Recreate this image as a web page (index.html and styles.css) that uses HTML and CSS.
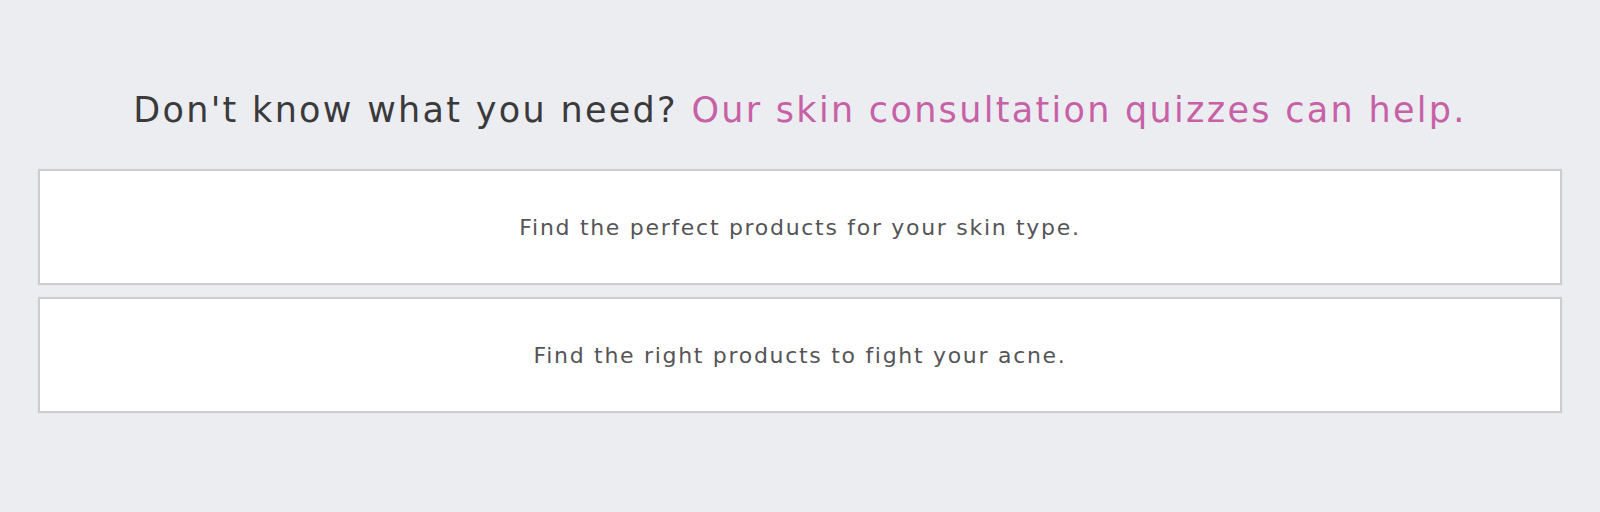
FILE: index.html
```html
<!DOCTYPE html>
<html>
<head>
<meta charset="utf-8">
<link rel="stylesheet" href="styles.css">
</head>
<body>
<section class="quiz">
  <h2 class="quiz-title">Don't know what you need? <span class="accent">Our skin consultation quizzes can help.</span></h2>
  <div class="quiz-list">
    <a class="quiz-card" href="#">Find the perfect products for your skin type.</a>
    <a class="quiz-card" href="#">Find the right products to fight your acne.</a>
  </div>
</section>
</body>
</html>
```
FILE: styles.css
```css
html, body {
  margin: 0;
  padding: 0;
  background: #ecedf1;
}
body {
  width: 1600px;
  height: 512px;
  overflow: hidden;
  font-family: "DejaVu Sans", "Open Sans", sans-serif;
}
.quiz {
  padding: 88px 38px 0;
}
.quiz-title {
  margin: 0;
  text-align: center;
  font-weight: 400;
  font-size: 35px;
  line-height: 44px;
  letter-spacing: 2.3px;
  color: #3a3a3c;
}
.accent {
  color: #c661a6;
}
.quiz-list {
  margin-top: 37px;
  display: flex;
  flex-direction: column;
  gap: 12px;
}
.quiz-card {
  display: flex;
  align-items: center;
  justify-content: center;
  height: 112px;
  background: #fff;
  border: 2px solid #cdcdd0;
  box-shadow: 0 0 1px #d6d6d9;
  color: #555557;
  font-size: 22px;
  letter-spacing: 1.7px;
  text-decoration: none;
}
```
